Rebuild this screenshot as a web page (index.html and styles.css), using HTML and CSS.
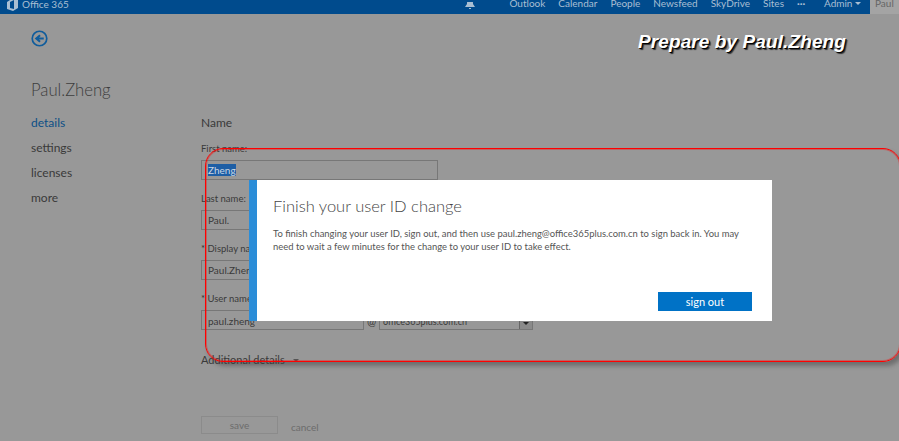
FILE: index.html
```html
<!DOCTYPE html>
<html lang="en">
<head>
  <meta charset="UTF-8" />
  <title>Paul.Zheng – Office 365</title>
  <link rel="stylesheet" href="styles.css">
</head>
<body>
  <header class="topbar">
    <div class="brand">
      <svg class="brand-logo" width="11" height="14" viewBox="0 0 11 14"><path d="M0 2 L6 -2 L11 0 L11 8 L6 11 L0 9 Z M3 2 L3 8 L7 9 L7 0 Z" fill="#a9bfd3" fill-rule="evenodd"/></svg>
      <span>Office 365</span>
    </div>
    <nav class="topnav">
      <svg class="bell" width="12" height="12" viewBox="0 0 12 12"><path d="M6 -3 C9 -3 9 0 9 2 L11 5 L1 5 L3 2 C3 0 3 -3 6 -3 Z M5 6 H7 V7 H5 Z" fill="#a9bfd3"/></svg>
      <a href="#">Outlook</a>
      <a href="#">Calendar</a>
      <a href="#">People</a>
      <a href="#">Newsfeed</a>
      <a href="#">SkyDrive</a>
      <a href="#">Sites</a>
      <a href="#" class="dots">&middot;&middot;&middot;</a>
      <a href="#" class="admin">Admin <i class="caret"></i></a>
      <a href="#" class="user-tab">Paul</a>
    </nav>
  </header>

  <main class="page">
    <a href="#" class="back">
      <svg width="17" height="17" viewBox="0 0 18 18"><circle cx="9" cy="9" r="7.7" fill="none" stroke="#0f5c9c" stroke-width="1.8"/><path d="M13.5 9 H7 M9.6 5.6 L5.6 9 L9.6 12.4" fill="none" stroke="#0f5c9c" stroke-width="2.2"/></svg>
    </a>
    <h1 class="user-name">Paul.Zheng</h1>
    <div class="columns">
      <ul class="side">
        <li class="active">details</li>
        <li>settings</li>
        <li>licenses</li>
        <li>more</li>
      </ul>
      <form class="form">
        <h2 class="form-title">Name</h2>
        <label class="field-label first">First name:</label>
        <div class="input wide"><span class="selected">Zheng</span></div>
        <label class="field-label">Last name:</label>
        <div class="input wide">Paul.</div>
        <label class="field-label"><b>*</b> Display name:</label>
        <div class="input wide">Paul.Zheng</div>
        <label class="field-label"><b>*</b> User name:</label>
        <div class="user-row">
          <div class="input short">paul.zheng</div>
          <span class="at">@</span>
          <div class="input domain">office365plus.com.cn<i class="select-btn"></i></div>
        </div>
        <div class="additional">Additional details <i class="caret dark"></i></div>
        <div class="actions">
          <button type="button" class="save">save</button>
          <span class="cancel">cancel</span>
        </div>
      </form>
    </div>
  </main>

  <!-- annotations added on top of the screenshot -->
  <div class="watermark">Prepare by Paul.Zheng</div>
  <div class="red-box"></div>

  <div class="dialog">
    <h3 class="dialog-title">Finish your user ID change</h3>
    <p class="dialog-text">To finish changing your user ID, sign out, and then use paul.zheng@office365plus.com.cn to sign back in. You may need to wait a few minutes for the change to your user ID to take effect.</p>
    <div class="dialog-foot"><button type="button" class="signout">sign out</button></div>
  </div>
</body>
</html>
```

FILE: styles.css
```css
html, body { height: 100%; }
body { margin: 0; height: 441px; overflow: hidden; position: relative; background: #989898; color: #333; font-family: Lato, sans-serif; }
a { color: inherit; text-decoration: none; }

.topbar { height: 14px; background: #004b8d; color: #a9bfd3; display: flex; justify-content: space-between; align-items: flex-end; overflow: hidden; font-size: 10px; line-height: 14px; }
.brand { display: flex; align-items: flex-end; gap: 4px; padding-left: 7px; }
.brand span { position: relative; top: -3px; font-size: 10px; }
.topnav { display: flex; align-items: flex-end; height: 14px; }
.topnav a { margin-left: 13px; position: relative; top: -4px; white-space: nowrap; }
.bell { margin-right: 20px; }
.dots { font-weight: bold; width: 14px; }
.admin { margin-right: 9px; }
.caret { display: inline-block; width: 0; height: 0; border: 3px solid transparent; border-top: 3px solid #a9bfd3; border-bottom: 0; vertical-align: 2px; }
.caret.dark { border-top-color: #555; margin-left: 6px; }
.topnav .user-tab { background: #a4a4a4; color: #666; width: 24px; height: 14px; margin-left: 0; padding-left: 5px; top: 0; line-height: 6px; overflow: hidden; }

.page { padding: 16px 0 0 31px; }
.back { display: block; height: 17px; }
.user-name { margin: 31px 0 0; font-size: 16.7px; line-height: 24px; font-weight: 300; color: #3d3d3d; }
.columns { display: flex; margin-top: 8px; }
.side { list-style: none; margin: 0; padding: 0; width: 170px; font-size: 12px; line-height: 25px; color: #3a3a3a; }
.side .active { color: #0c4f86; }

.form { width: 340px; font-size: 10px; color: #3a3a3a; }
.form-title { margin: 0; height: 24px; font-size: 12px; line-height: 25px; font-weight: 400; }
.field-label { display: block; height: 13px; line-height: 13px; margin: 12px 0 5px; font-size: 9.5px; white-space: nowrap; }
.field-label.first { margin-top: 8px; }
.field-label b { color: #333; font-weight: 400; }
.input { box-sizing: border-box; height: 20px; border: 1px solid #777; padding-left: 6px; line-height: 18px; white-space: nowrap; }
.wide { width: 237px; }
.short { width: 163px; }
.selected { background: #1d5ea5; color: #c9d6e4; }
.user-row { display: flex; align-items: flex-start; height: 20px; }
.user-row .input { line-height: 21px; }
.at { width: 15px; height: 20px; text-align: center; line-height: 22px; font-size: 11px; }
.domain { width: 154px; position: relative; padding-left: 3px; font-size: 9px; }
.select-btn { position: absolute; right: 0; top: 0; width: 12px; height: 18px; background: #8a8a8a; border-left: 1px solid #666; }
.select-btn::after { content: ""; position: absolute; left: 3px; bottom: 4px; border: 3px solid transparent; border-top: 3px solid #222; border-bottom: 0; }
.additional { margin-top: 21px; height: 17px; font-size: 11px; line-height: 17px; }
.actions { display: flex; align-items: flex-end; gap: 13px; margin-top: 48px; }
.save { box-sizing: border-box; width: 77px; height: 18px; padding: 0; background: transparent; border: 1px solid #8b8b8b; font: 10px Lato, sans-serif; color: #6c6c6c; }
.cancel { color: #6c6c6c; line-height: 13px; }

.watermark { position: absolute; left: 638px; top: 31px; font: italic bold 19px 'Liberation Sans', sans-serif; letter-spacing: 0.1px; color: #fff; text-shadow: 1px 1px 0 #000, 2px 2px 1px #333; white-space: nowrap; }
.red-box { position: absolute; left: 205px; top: 148px; width: 694px; height: 212px; border: 1px solid #f00; border-radius: 18px; box-shadow: 3px 4px 4px rgba(60,60,60,0.45), inset 0 0 0 1px rgba(255,0,0,0.35); }

.dialog { position: absolute; left: 249px; top: 180px; box-sizing: border-box; width: 523px; height: 141px; background: #fff; border-left: 8px solid #2b8dd8; padding: 15px 20px 10px 16px; display: flex; flex-direction: column; }
.dialog-title { margin: 0; font-size: 16.5px; line-height: 22px; font-weight: 300; color: #444; }
.dialog-text { margin: 10px 0 0; font-size: 9.45px; line-height: 13px; color: #555; }
.dialog-foot { margin-top: auto; display: flex; justify-content: flex-end; }
.signout { width: 94px; height: 19px; padding: 0; border: 0; background: #0072c6; color: #fff; font: 11px Lato, sans-serif; }
```
